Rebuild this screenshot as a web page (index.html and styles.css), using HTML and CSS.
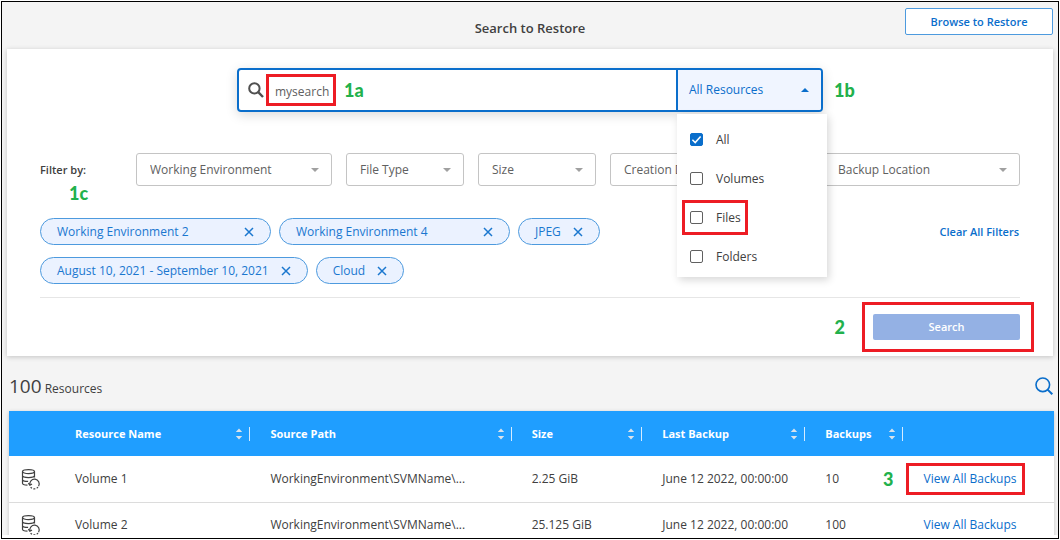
FILE: index.html
```html
<!DOCTYPE html>
<html lang="en">
<head>
<meta charset="utf-8">
<title>Search to Restore</title>
<link rel="stylesheet" href="styles.css">
</head>
<body>
<svg class="sprite" aria-hidden="true">
  <symbol id="close" viewBox="0 0 10 10"><path d="M1 1l8 8M9 1l-8 8" fill="none" stroke="currentColor" stroke-width="1.5"/></symbol>
  <symbol id="sort" viewBox="0 0 8 12"><path d="M4 0.5L7.2 4H0.8zM4 11.5L0.8 8h6.4z" fill="currentColor"/></symbol>
  <symbol id="check" viewBox="0 0 13 13"><path d="M2.4 6.8l2.8 2.8 5.4-6" fill="none" stroke="currentColor" stroke-width="1.5"/></symbol>
  <symbol id="volume" viewBox="0 0 20 22">
    <g fill="none" stroke="currentColor" stroke-width="1.2">
      <ellipse cx="7.5" cy="3.6" rx="6" ry="2"/>
      <path d="M1.5 3.6v11.6c0 1.2 2.3 1.9 5 2M13.5 3.6v6M1.5 7.6c0 1.2 2.7 2 6 2s6-.8 6-2M1.5 11.4c0 1.2 2.7 2 5.6 2"/>
      <path d="M9 17.2a4.7 4.7 0 1 1 8.6 1"/>
      <path d="M7.3 15.2l1.6 2.1 2.1-1.4"/>
      <path d="M17 19a4.7 4.7 0 0 1-7.4.2" stroke-dasharray="1.8 1.4"/>
    </g>
  </symbol>
</svg>
<div class="frame">
<div class="app">
  <header class="top">
    <h1>Search to Restore</h1>
    <button class="browse" type="button">Browse to Restore</button>
  </header>

  <form class="card">
    <div class="searchbox">
      <svg class="lens" viewBox="0 0 16 16" aria-hidden="true"><circle cx="6.4" cy="6.4" r="5.2" fill="none" stroke="currentColor" stroke-width="2"/><path d="M10.2 10.2L15 15" stroke="currentColor" stroke-width="2.4"/></svg>
      <div class="query">
        <input type="text" value="mysearch" aria-label="Search text">
        <span class="step step-right">1a</span>
      </div>
      <div class="scope">
        <button class="scope-button" type="button" aria-expanded="true">All Resources</button>
        <span class="step step-right">1b</span>
        <div class="menu">
          <label><input type="checkbox" checked><svg><use href="#check"/></svg><span>All</span></label>
          <label><input type="checkbox"><span>Volumes</span></label>
          <label class="files"><input type="checkbox"><span>Files</span></label>
          <label><input type="checkbox"><span>Folders</span></label>
        </div>
      </div>
    </div>

    <div class="filters">
      <div class="filter-label">Filter by:<span class="step step-below">1c</span></div>
      <div class="pick wide"><select aria-label="Working Environment"><option>Working Environment</option></select></div>
      <div class="pick"><select aria-label="File Type"><option>File Type</option></select></div>
      <div class="pick"><select aria-label="Size"><option>Size</option></select></div>
      <div class="pick date"><select aria-label="Creation Date"><option>Creation Date</option></select></div>
      <div class="pick wide"><select aria-label="Backup Location"><option>Backup Location</option></select></div>
    </div>

    <div class="applied">
      <ul class="chips">
        <li class="chip long">Working Environment 2<button type="button" aria-label="Remove Working Environment 2"><svg><use href="#close"/></svg></button></li>
        <li class="chip long">Working Environment 4<button type="button" aria-label="Remove Working Environment 4"><svg><use href="#close"/></svg></button></li>
        <li class="chip">JPEG<button type="button" aria-label="Remove JPEG"><svg><use href="#close"/></svg></button></li>
        <li class="chip">August 10, 2021 - September 10, 2021<button type="button" aria-label="Remove date range"><svg><use href="#close"/></svg></button></li>
        <li class="chip">Cloud<button type="button" aria-label="Remove Cloud"><svg><use href="#close"/></svg></button></li>
      </ul>
      <a class="clear" href="#">Clear All Filters</a>
    </div>

    <div class="actions">
      <div class="submit">
        <span class="step step-left">2</span>
        <button type="submit">Search</button>
      </div>
    </div>
  </form>

  <div class="summary">
    <h2><span class="count">100</span> Resources</h2>
    <button type="button" aria-label="Search resources"><svg viewBox="0 0 18 18"><circle cx="7.8" cy="7.8" r="6.8" fill="none" stroke="currentColor" stroke-width="1.6"/><path d="M12.6 12.6l4.7 4.7" stroke="currentColor" stroke-width="2"/></svg></button>
  </div>

  <table class="results">
    <colgroup><col class="c-icon"><col class="c-name"><col class="c-path"><col class="c-size"><col class="c-last"><col class="c-count"><col class="c-link"></colgroup>
    <thead>
      <tr>
        <td></td>
        <th><div>Resource Name<svg><use href="#sort"/></svg></div></th>
        <th><div>Source Path<svg><use href="#sort"/></svg></div></th>
        <th><div>Size<svg><use href="#sort"/></svg></div></th>
        <th><div>Last Backup<svg><use href="#sort"/></svg></div></th>
        <th><div>Backups<svg><use href="#sort"/></svg></div></th>
        <td></td>
      </tr>
    </thead>
    <tbody>
      <tr>
        <td class="kind"><svg><use href="#volume"/></svg></td>
        <td>Volume 1</td><td>WorkingEnvironment\SVMName\...</td><td>2.25 GiB</td><td>June 12 2022, 00:00:00</td><td>10</td>
        <td><span class="view"><a href="#">View All Backups</a><span class="step step-left">3</span></span></td>
      </tr>
      <tr>
        <td class="kind"><svg><use href="#volume"/></svg></td>
        <td>Volume 2</td><td>WorkingEnvironment\SVMName\...</td><td>25.125 GiB</td><td>June 12 2022, 00:00:00</td><td>100</td>
        <td><a href="#">View All Backups</a></td>
      </tr>
    </tbody>
  </table>
</div>
</div>
</body>
</html>
```

FILE: styles.css
```css
* { box-sizing: border-box; }

body {
  margin: 0;
  padding: 1px;
  background: #fff;
  color: #404040;
  font: 12px/16px "Open Sans", "Noto Sans", sans-serif;
}

button, input, select { font: inherit; color: inherit; }
button { cursor: pointer; }
a { color: #0a6ecb; text-decoration: none; }
.sprite { position: absolute; width: 0; height: 0; }

.frame {
  height: calc(100vh - 2px);
  padding-bottom: 3px;
  border: 1px solid #000;
}
.app {
  height: 100%;
  overflow: hidden;
  background: #f4f4f4;
}

/* Header */
.top {
  display: grid;
  grid-template-columns: 1fr auto 1fr;
  align-items: start;
  padding: 6px 5px 0;
  height: 47px;
}
.top h1 {
  grid-column: 2;
  margin: 0;
  padding-top: 10px;
  font-size: 13px;
  line-height: 20px;
  font-weight: 600;
}
.browse {
  justify-self: end;
  width: 148px;
  height: 27px;
  padding: 0;
  border: 1px solid #4d9ade;
  border-radius: 2px;
  background: #fff;
  color: #0a6ecb;
  font-size: 11px;
  font-weight: 600;
}

/* Search card */
.card {
  margin: 0 5px;
  padding: 19px 33px 0;
  background: #fff;
  box-shadow: 0 1px 5px rgba(0, 0, 0, .2);
}
.searchbox {
  display: flex;
  align-items: center;
  max-width: 586px;
  height: 44px;
  margin: 0 auto;
  border: 2px solid #0a6ecb;
  border-radius: 4px;
  box-shadow: 0 3px 12px rgba(0, 0, 0, .15);
}
.lens { width: 16px; height: 16px; margin: 0 2px 0 9px; flex: none; color: #505050; }
.query { position: relative; width: 70px; height: 32px; }
.query input {
  width: 100%;
  height: 100%;
  padding: 2px 0 0 6px;
  border: 3px solid #ed1c24;
  background: transparent;
  color: #606060;
  outline: 0;
}
.scope {
  position: relative;
  width: 145px;
  height: 100%;
  margin-left: auto;
  border-left: 2px solid #0a6ecb;
}
.scope-button {
  display: flex;
  align-items: center;
  justify-content: space-between;
  width: 100%;
  height: 100%;
  padding: 0 12px 0 11px;
  border: 0;
  border-radius: 0 2px 2px 0;
  background: #f0f5ff;
  color: #0a6ecb;
}
.scope-button::after {
  content: "";
  border: 4px solid transparent;
  border-top: 0;
  border-bottom-color: #0a6ecb;
}
.menu {
  position: absolute;
  z-index: 2;
  top: 44px;
  left: -1px;
  width: 150px;
  padding: 6px 0 1px;
  background: #fff;
  box-shadow: 2px 3px 8px rgba(0, 0, 0, .16);
}
.menu label {
  position: relative;
  display: flex;
  align-items: center;
  gap: 13px;
  height: 39px;
  padding-left: 13px;
}
.menu input {
  appearance: none;
  width: 13px;
  height: 13px;
  margin: 0;
  border: 1px solid #606060;
  border-radius: 2px;
}
.menu input:checked { border-color: #0a6ecb; background: #0a6ecb; }
.menu svg {
  position: absolute;
  left: 13px;
  width: 13px;
  height: 13px;
  color: #fff;
  pointer-events: none;
}
.files::after {
  content: "";
  position: absolute;
  inset: 2px 79px 2px 5px;
  border: 3px solid #ed1c24;
}

/* Filters */
.filters { display: flex; gap: 14px; margin-top: 41px; }
.filter-label {
  position: relative;
  width: 82px;
  flex: none;
  font-size: 11px;
  line-height: 33px;
  font-weight: 600;
}
.pick { position: relative; flex: 118 1 0; }
.pick.wide { flex-grow: 196; }
.pick.date { flex-grow: 200; }
.pick select {
  width: 100%;
  height: 33px;
  padding: 0 24px 0 13px;
  appearance: none;
  border: 1px solid #c4c4c4;
  border-radius: 3px;
  background: #fff;
  color: #606060;
}
.pick::after {
  content: "";
  position: absolute;
  top: 15px;
  right: 13px;
  border: 4px solid transparent;
  border-bottom: 0;
  border-top-color: #a0a0a0;
  pointer-events: none;
}

.applied {
  display: flex;
  justify-content: space-between;
  align-items: start;
  padding: 32px 0 13px;
  border-bottom: 1px solid #e6e6e6;
}
.chips {
  display: flex;
  flex-wrap: wrap;
  gap: 12px 8px;
  max-width: 600px;
  margin: 0;
  padding: 0;
  list-style: none;
}
.chip {
  display: flex;
  align-items: center;
  justify-content: space-between;
  gap: 12px;
  height: 27px;
  padding: 0 16px;
  border: 1px solid #4d9ade;
  border-radius: 14px;
  background: #ebf2ff;
  color: #1a77cf;
}
.chip.long { width: 231px; }
.chip button { display: flex; padding: 0; border: 0; background: none; }
.chip svg { width: 10px; height: 10px; }
.clear { margin-right: 1px; font-size: 11px; line-height: 27px; font-weight: 600; }

.actions { display: flex; justify-content: flex-end; padding: 16px 0; }
.submit { position: relative; }
.submit::after {
  content: "";
  position: absolute;
  inset: -12px -14px -12px -11px;
  border: 3px solid #ed1c24;
  pointer-events: none;
}
.submit button {
  display: block;
  width: 147px;
  height: 26px;
  padding: 0;
  border: 0;
  border-radius: 2px;
  background: #94b1e4;
  color: #fff;
  font-size: 11px;
  font-weight: 600;
}

/* Numbered callouts */
.step {
  position: absolute;
  color: #22b14c;
  font: 900 18px/20px Lato, sans-serif;
}
.step-right { top: 50%; left: 100%; margin: -10px 0 0 8px; }
.scope .step-right { margin-left: 13px; }
.step-below { top: 30px; left: 29px; }
.step-left { top: 50%; right: 100%; margin: -10px 28px 0 0; }

/* Results */
.summary {
  display: flex;
  align-items: center;
  justify-content: space-between;
  height: 55px;
  padding: 4px 5px 0 7px;
}
.summary h2 { margin: 0; padding-top: 4px; font-size: 12px; line-height: 28px; font-weight: 500; }
.count { font-size: 19px; }
.summary button { display: flex; padding: 0; border: 0; background: none; color: #0a6ecb; }
.summary svg { width: 18px; height: 18px; }

.results {
  width: calc(100% - 11px);
  margin-left: 7px;
  table-layout: fixed;
  border-collapse: collapse;
  background: #fff;
  box-shadow: 0 1px 4px rgba(0, 0, 0, .2);
}
.c-icon { width: 4.4%; }
.c-name { width: 18.7%; }
.c-path { width: 25%; }
.c-size { width: 12.5%; }
.c-last { width: 15.6%; }
.c-count { width: 9.4%; }
.c-link { width: 14.4%; }

.results th, .results td { padding: 0 0 0 20px; text-align: left; white-space: nowrap; }
.results thead { height: 45px; background: #1f9eff; color: #fff; }
.results th { font-size: 11px; font-weight: 700; }
.results th div {
  display: flex;
  align-items: center;
  justify-content: space-between;
  height: 14px;
  padding-right: 6px;
  border-right: 1px solid #d5ebff;
}
.results th svg { width: 8px; height: 12px; color: #d9e3ec; }
.results tbody tr { height: 46px; border-bottom: 1px solid #dcdcdc; }
.results .kind { padding-left: 12px; }
.kind svg { display: block; width: 20px; height: 22px; }
.view { position: relative; display: inline-block; }
.view::after {
  content: "";
  position: absolute;
  inset: -8px -9px -8px -17px;
  border: 3px solid #ed1c24;
  pointer-events: none;
}
.view .step-left { margin-right: 30px; }
```
